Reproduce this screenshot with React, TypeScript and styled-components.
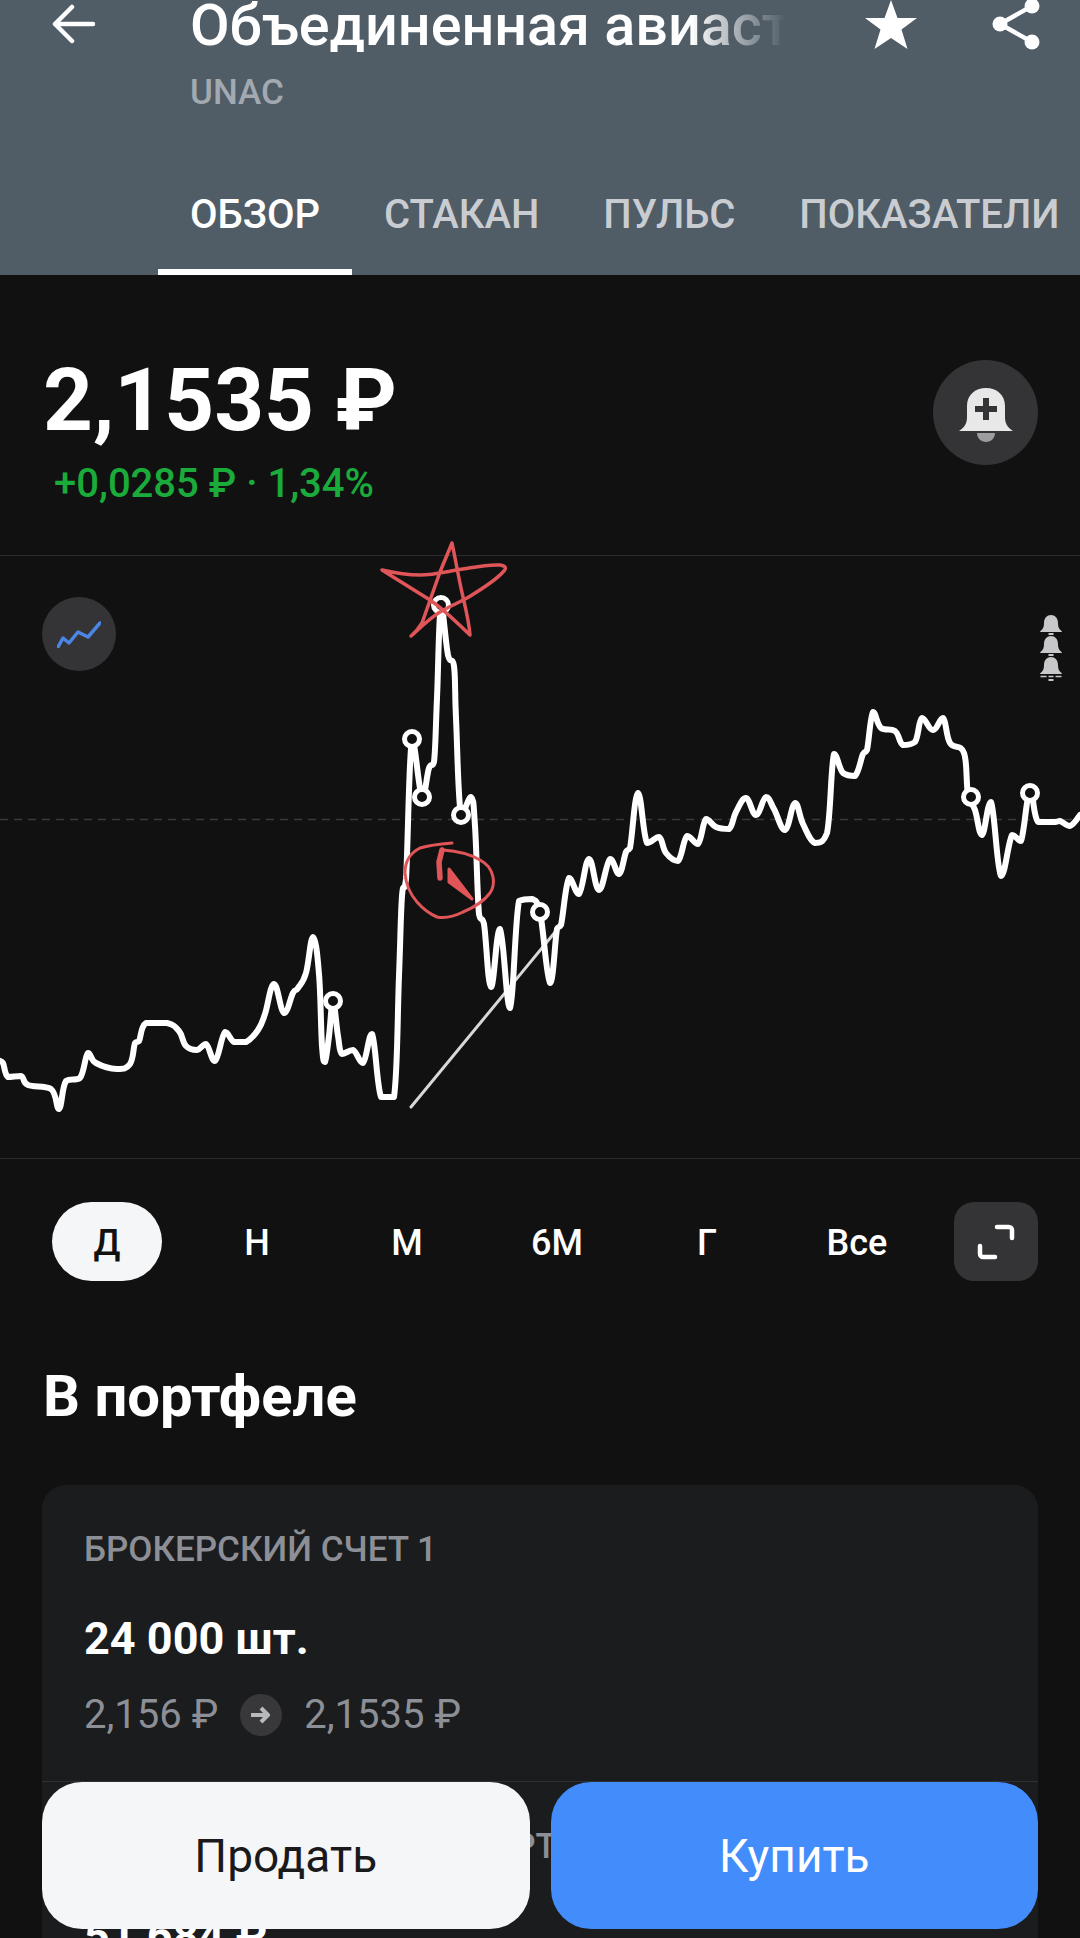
import React from 'react';
import styled, { createGlobalStyle } from 'styled-components';

const GlobalStyle = createGlobalStyle`
  html, body {
    margin: 0;
    padding: 0;
    background: #111112;
  }
  * {
    box-sizing: border-box;
  }
`;

const Page = styled.div`
  position: relative;
  width: 1080px;
  height: 1938px;
  overflow: hidden;
  background: #111112;
  color: #fff;
  font-family: Roboto, "Noto Sans", sans-serif;
`;

const Header = styled.header`
  height: 275px;
  background: #505c66;
  display: flex;
  flex-direction: column;
`;

const TopRow = styled.div`
  display: flex;
  align-items: flex-start;
  height: 162px;
`;

const BackButton = styled.div`
  width: 190px;
  padding: 4px 0 0 52px;
`;

const Names = styled.div`
  width: 596px;
`;

const Title = styled.div`
  font-size: 57.5px;
  font-weight: 500;
  line-height: 52px;
  white-space: nowrap;
  overflow: hidden;
  -webkit-mask-image: linear-gradient(90deg, #000 84%, transparent 100%);
  mask-image: linear-gradient(90deg, #000 84%, transparent 100%);
`;

const Ticker = styled.div`
  margin-top: 22px;
  font-size: 35px;
  line-height: 38px;
  font-weight: 500;
  color: #a2a9b0;
`;

const HeaderIcons = styled.div`
  flex: 1;
  display: flex;
  justify-content: space-between;
  padding: 0 40px 0 79px;
`;

const Tabs = styled.nav`
  display: flex;
  padding-left: 158px;
  height: 113px;
`;

const Tab = styled.div<{ $active?: boolean }>`
  padding: 32px 32px 0;
  font-size: 40px;
  line-height: 42px;
  font-weight: 500;
  white-space: nowrap;
  color: ${(p) => (p.$active ? '#fff' : '#c9cdd1')};
  border-bottom: 6px solid ${(p) => (p.$active ? '#fff' : 'transparent')};
`;

const PriceBlock = styled.section`
  height: 281px;
  padding: 80px 42px 0 43px;
  display: flex;
  justify-content: space-between;
  border-bottom: 1px solid #2b2b2d;
`;

const Price = styled.div`
  font-size: 87px;
  line-height: 90px;
  font-weight: 700;
`;

const Change = styled.div`
  margin: 17px 0 0 11px;
  font-size: 40px;
  line-height: 44px;
  font-weight: 500;
  color: #1bab3a;
`;

const RoundButton = styled.div`
  width: 105px;
  height: 105px;
  margin-top: 5px;
  padding-top: 4px;
  border-radius: 50%;
  background: #343436;
  display: flex;
  align-items: center;
  justify-content: center;
`;

const Chart = styled.section`
  position: relative;
  height: 603px;
  border-bottom: 1px solid #2b2b2d;
`;

const ChartSvg = styled.svg`
  display: block;
  width: 1080px;
  height: 602px;
  overflow: visible;
`;

const ChartType = styled.div`
  position: absolute;
  left: 42px;
  top: 41px;
  width: 74px;
  height: 74px;
  border-radius: 50%;
  background: #343436;
  display: flex;
  align-items: center;
  justify-content: center;
`;

const Periods = styled.div`
  display: flex;
  align-items: center;
  padding: 43px 42px 0 32px;
`;

const Period = styled.div<{ $active?: boolean }>`
  width: 150px;
  height: 79px;
  display: flex;
  align-items: center;
  justify-content: center;
  font-size: 36px;
  font-weight: 500;
  padding-top: ${(p) => (p.$active ? '0' : '3px')};
  color: ${(p) => (p.$active ? '#111' : '#fff')};
`;

const ActivePill = styled.div`
  width: 110px;
  height: 79px;
  padding-top: 3px;
  border-radius: 40px;
  background: #f5f6f8;
  display: flex;
  align-items: center;
  justify-content: center;
`;

const ExpandButton = styled.div`
  margin-left: auto;
  width: 84px;
  height: 79px;
  border-radius: 20px;
  background: #343436;
  display: flex;
  align-items: center;
  justify-content: center;
`;

const SectionTitle = styled.h2`
  margin: 84px 0 0 43px;
  font-size: 58px;
  line-height: 62px;
  font-weight: 700;
`;

const Card = styled.section`
  margin: 58px 42px 0;
  background: #1b1c1e;
  border-radius: 24px;
`;

const Account = styled.div`
  padding: 43px 42px 0;
  height: 297px;
  border-bottom: 1px solid #2f3034;

  &:last-child {
    border-bottom: none;
  }
`;

const AccountName = styled.div`
  font-size: 35px;
  line-height: 44px;
  font-weight: 500;
  color: #8d8f96;
  white-space: nowrap;
`;

const Amount = styled.div`
  margin-top: 41px;
  font-size: 45px;
  line-height: 52px;
  font-weight: 700;
  color: #fff;
`;

const PriceRow = styled.div`
  margin-top: 26px;
  display: flex;
  align-items: center;
  gap: 22px;
  font-size: 40px;
  line-height: 48px;
  color: #8d8f96;
`;

const ArrowDot = styled.div`
  width: 42px;
  height: 42px;
  border-radius: 50%;
  background: #38383b;
  display: flex;
  align-items: center;
  justify-content: center;
`;

const Actions = styled.div`
  position: absolute;
  left: 42px;
  right: 42px;
  top: 1782px;
  display: grid;
  grid-template-columns: 1fr 1fr;
  gap: 21px;
`;

const ActionButton = styled.div<{ $primary?: boolean }>`
  height: 147px;
  border-radius: 40px;
  display: flex;
  align-items: center;
  justify-content: center;
  font-size: 46px;
  background: ${(p) => (p.$primary ? '#438cfb' : '#f5f6f8')};
  color: ${(p) => (p.$primary ? '#fff' : '#1a1a1c')};
`;

// points read off the price line, in page px with y measured from the chart top
const linePoints: [number, number][] = [
  [0, 505], [3, 507], [8, 521], [21, 520], [28, 529], [51, 533], [59, 553], [66, 525], [80, 522], [88, 497],
  [96, 507], [117, 513], [130, 508], [135, 487], [139, 485], [146, 467], [167, 467], [179, 475], [186, 490],
  [197, 494], [206, 488], [215, 505], [225, 476], [234, 486], [246, 486], [258, 474], [265, 458], [274, 428],
  [284, 457], [293, 437], [298, 432], [306, 417], [313, 381], [319, 418], [322, 490], [325, 506], [329, 480],
  [333, 446], [338, 480], [342, 498], [353, 494], [363, 507], [372, 478], [381, 541], [394, 541], [399, 420],
  [402, 340], [406, 323], [412, 183], [422, 241], [429, 212], [434, 206], [437, 142], [441, 49], [448, 99],
  [454, 110], [456, 162], [461, 259], [471, 241], [475, 270], [479, 358], [484, 368], [491, 431], [500, 373],
  [510, 452], [519, 345], [532, 343], [540, 356], [550, 427], [557, 373], [561, 369], [569, 322], [579, 338],
  [589, 303], [599, 334], [610, 303], [619, 318], [626, 296], [630, 292], [638, 237], [647, 287], [659, 281],
  [666, 297], [678, 305], [687, 280], [698, 288], [706, 263], [716, 271], [729, 273], [736, 256], [746, 242],
  [756, 259], [766, 241], [774, 253], [785, 274], [795, 247], [803, 268], [815, 287], [827, 277], [834, 198],
  [843, 217], [855, 220], [863, 198], [867, 194], [873, 156], [881, 172], [895, 175], [903, 189], [915, 186],
  [922, 162], [933, 174], [943, 162], [950, 187], [964, 197], [968, 238], [975, 254], [982, 279], [991, 246],
  [1001, 320], [1012, 279], [1021, 285], [1030, 234], [1038, 266], [1055, 266], [1060, 265], [1070, 270],
  [1080, 259],
];

const markers: [number, number][] = [
  [333, 445], [412, 183], [422, 241], [441, 49], [461, 259], [540, 356], [971, 241], [1030, 237],
];

const clamp = (v: number, a: number, b: number) => Math.min(Math.max(a, b), Math.max(Math.min(a, b), v));

// rounded line through the points; control points stay inside each segment's y range
// so the tops and bottoms round off instead of overshooting
const buildLine = (pts: [number, number][]) => {
  let d = `M${pts[0][0]} ${pts[0][1]}`;
  const k = 0.2;
  for (let i = 0; i < pts.length - 1; i++) {
    const p0 = pts[i - 1] || pts[i];
    const p1 = pts[i];
    const p2 = pts[i + 1];
    const p3 = pts[i + 2] || p2;
    const c1y = clamp(p1[1] + (p2[1] - p0[1]) * k, p1[1], p2[1]);
    const c2y = clamp(p2[1] - (p3[1] - p1[1]) * k, p1[1], p2[1]);
    d += ` C${p1[0] + (p2[0] - p0[0]) * k} ${c1y} ${p2[0] - (p3[0] - p1[0]) * k} ${c2y} ${p2[0]} ${p2[1]}`;
  }
  return d;
};

const Bell = ({ top, dashes }: { top: number; dashes?: boolean }) => (
  <g transform={`translate(1051 ${top})`} fill="#c8c8ca">
    <path d="M0 0c4 0 7 3 7 8 0 4 1 6 3.500 8 .5.5.5 1 0 1h-21c-.5 0-.5-.5 0-1 2.500-2 3.500-4 3.500-8 0-5 3-8 7-8z" />
    <rect x="-2.500" y={dashes ? 22 : 18} width="5" height="2" />
    {dashes && <path d="M-10.500 19.500h6M-2.500 19.500h5M4.500 19.500h6" stroke="#c8c8ca" strokeWidth="1.500" />}
  </g>
);

export default function App() {
  return (
    <Page>
      <GlobalStyle />
      <Header>
        <TopRow>
          <BackButton>
            <svg width="44" height="44" viewBox="0 0 44 44" fill="none" stroke="#fff" strokeWidth="4.500" strokeLinecap="round" strokeLinejoin="round">
              <path d="M41 20H3M20 3 3 20l17 17" />
            </svg>
          </BackButton>
          <Names>
            <Title>Объединенная авиастроительная</Title>
            <Ticker>UNAC</Ticker>
          </Names>
          <HeaderIcons>
            <svg width="52" height="50" viewBox="0 0 52 50" fill="#fff">
              <path d="M26 0l6.500 18H52L36.500 29.500l6 19.500L26 38 9.500 49l6-19.500L0 18h19.500z" />
            </svg>
            <svg width="52" height="50" viewBox="0 0 52 50" fill="none" stroke="#fff" strokeWidth="4.500">
              <path d="M44 6 12 24l32 18" />
              <circle cx="44" cy="6" r="7.500" fill="#fff" stroke="none" />
              <circle cx="12" cy="24" r="7.500" fill="#fff" stroke="none" />
              <circle cx="44" cy="42" r="7.500" fill="#fff" stroke="none" />
            </svg>
          </HeaderIcons>
        </TopRow>
        <Tabs>
          <Tab $active>ОБЗОР</Tab>
          <Tab>СТАКАН</Tab>
          <Tab>ПУЛЬС</Tab>
          <Tab>ПОКАЗАТЕЛИ</Tab>
        </Tabs>
      </Header>

      <PriceBlock>
        <div>
          <Price>2,1535 ₽</Price>
          <Change>+0,0285 ₽ · 1,34%</Change>
        </div>
        <RoundButton>
          <svg width="56" height="56" viewBox="0 0 56 56">
            <path d="M1 44c6-4 8-8 8-14V19C9 8 17 1 28 1s19 7 19 18v11c0 6 2 10 8 14z" fill="#e8e8e9" />
            <path d="M19 46h18c0 5-4 9-9 9s-9-4-9-9z" fill="#9d9d9f" />
            <path d="M25 11h6v8h8v6h-8v8h-6v-8h-8v-6h8z" fill="#343436" />
          </svg>
        </RoundButton>
      </PriceBlock>

      <Chart>
        <ChartSvg viewBox="0 0 1080 602" fill="none">
          <path d="M0 263.500H1080" stroke="#3a3a3c" strokeWidth="1.500" strokeDasharray="8 6" />
          <path d="M411 551 556 375" stroke="#d8d8d8" strokeWidth="3" strokeLinecap="round" />
          <path d={buildLine(linePoints)} stroke="#fff" strokeWidth="6" strokeLinecap="round" strokeLinejoin="round" />
          {markers.map(([x, y]) => (
            <circle key={`${x}-${y}`} cx={x} cy={y} r="7.500" fill="#111112" stroke="#fff" strokeWidth="5" />
          ))}
          {/* hand-drawn red star and clock on top of the line */}
          <path
            d="M411 80C420 72 430 62 440 56C450 50 458 47 467 42C480 34 494 26 503 16C507 12 506 10 500 9C485 8 472 12 457 14C445 16 432 19 420 19C408 19 395 17 382 14C398 24 414 34 430 44C445 54 458 68 470 79C469 66 466 54 463 41C459 24 456 6 452 -13C448 -3 444 6 440 16C434 33 428 50 422 67C419 72 416 76 411 80"
            stroke="#e05558"
            strokeWidth="3.500"
            strokeLinecap="round"
            strokeLinejoin="round"
          />
          <path
            d="M452 287C440 288 430 289 420 292C410 297 405 306 405 317C406 330 410 338 417 346C424 354 430 358 437 361C447 363 455 360 463 356C475 351 484 345 490 337C494 331 494 326 493 321C491 312 487 308 480 304C470 298 457 295 443 294"
            stroke="#e05558"
            strokeWidth="3"
            strokeLinecap="round"
          />
          <path d="M442 294 439 306 440 322" stroke="#e05558" strokeWidth="5.500" strokeLinecap="round" strokeLinejoin="round" />
          <path d="M449 313 472 343 449 326z" fill="#e05558" stroke="#e05558" strokeWidth="3" strokeLinejoin="round" />
          <Bell top={59} />
          <Bell top={80} />
          <Bell top={101} dashes />
        </ChartSvg>
        <ChartType>
          <svg width="44" height="27" viewBox="0 0 44 27" fill="none" stroke="#4a86e4" strokeWidth="3.500" strokeLinejoin="round" strokeLinecap="round">
            <path d="M1 26l5-9 6 5 9-11 10 5 12-14" />
          </svg>
        </ChartType>
      </Chart>

      <Periods>
        <Period $active>
          <ActivePill>Д</ActivePill>
        </Period>
        <Period>Н</Period>
        <Period>М</Period>
        <Period>6М</Period>
        <Period>Г</Period>
        <Period>Все</Period>
        <ExpandButton>
          <svg width="38" height="36" viewBox="0 0 38 36" fill="none" stroke="#fff" strokeWidth="4.500" strokeLinecap="round" strokeLinejoin="round">
            <path d="M20 3h12a3 3 0 0 1 3 3v8M3 22v8a3 3 0 0 0 3 3h12" />
          </svg>
        </ExpandButton>
      </Periods>

      <SectionTitle>В портфеле</SectionTitle>

      <Card>
        <Account>
          <AccountName>БРОКЕРСКИЙ СЧЕТ 1</AccountName>
          <Amount>24 000 шт.</Amount>
          <PriceRow>
            <span>2,156 ₽</span>
            <ArrowDot>
              <svg width="22" height="20" viewBox="0 0 22 20" fill="none" stroke="#b8b9bc" strokeWidth="4" strokeLinejoin="round">
                <path d="M1 10h17M11 3l7 7-7 7" />
              </svg>
            </ArrowDot>
            <span>2,1535 ₽</span>
          </PriceRow>
        </Account>
        <Account>
          <AccountName>БРОКЕРСКИЙ СЧЕТ 2 · ПОРТФЕЛЬ</AccountName>
          <Amount>51 684 ₽</Amount>
        </Account>
      </Card>

      <Actions>
        <ActionButton>Продать</ActionButton>
        <ActionButton $primary>Купить</ActionButton>
      </Actions>
    </Page>
  );
}
